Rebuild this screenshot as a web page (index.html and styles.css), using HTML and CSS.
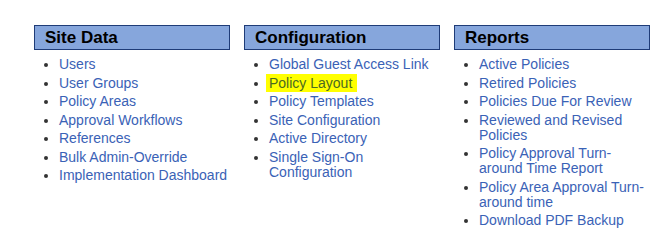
FILE: index.html
```html
<!DOCTYPE html>
<html lang="en">
  <head>
    <meta charset="utf-8" />
    <title>Administration</title>
    <link rel="stylesheet" href="styles.css">
  </head>
  <body>
    <div class="admin-menu">
      <div class="menu-column">
        <h2 class="menu-header">Site Data</h2>
        <ul class="menu-list">
          <li><a href="#">Users</a></li>
          <li><a href="#">User Groups</a></li>
          <li><a href="#">Policy Areas</a></li>
          <li><a href="#">Approval Workflows</a></li>
          <li><a href="#">References</a></li>
          <li><a href="#">Bulk Admin-Override</a></li>
          <li><a href="#">Implementation Dashboard</a></li>
        </ul>
      </div>

      <div class="menu-column">
        <h2 class="menu-header">Configuration</h2>
        <ul class="menu-list">
          <li><a href="#">Global Guest Access Link</a></li>
          <li><a href="#" class="current">Policy Layout</a></li>
          <li><a href="#">Policy Templates</a></li>
          <li><a href="#">Site Configuration</a></li>
          <li><a href="#">Active Directory</a></li>
          <li><a href="#">Single Sign-On Configuration</a></li>
        </ul>
      </div>

      <div class="menu-column">
        <h2 class="menu-header">Reports</h2>
        <ul class="menu-list">
          <li><a href="#">Active Policies</a></li>
          <li><a href="#">Retired Policies</a></li>
          <li><a href="#">Policies Due For Review</a></li>
          <li><a href="#">Reviewed and Revised Policies</a></li>
          <li><a href="#">Policy Approval Turn-around Time Report</a></li>
          <li><a href="#">Policy Area Approval Turn-around time</a></li>
          <li><a href="#">Download PDF Backup</a></li>
        </ul>
      </div>
    </div>
  </body>
</html>
```

FILE: styles.css
```css
* {
  margin: 0;
  padding: 0;
  box-sizing: border-box;
}

body {
  font-family: "Liberation Sans", Arial, sans-serif;
  background: #ffffff;
  color: #333;
}

.admin-menu {
  display: flex;
  gap: 14px;
  padding: 25px 0 0 34px;
}

.menu-column {
  width: 196px;
}

.menu-header {
  height: 25px;
  background: #86a6dc;
  border: 1px solid #1f3c78;
  padding-left: 10px;
  font-size: 17px;
  font-weight: bold;
  line-height: 23px;
  color: #000;
}

.menu-list {
  margin-top: 7px;
  padding-left: 25px;
  font-size: 14px;
  line-height: 15px;
}

.menu-list li {
  margin-bottom: 3.5px;
  color: #333;
}

.menu-list a {
  color: #3a62b6;
  text-decoration: none;
}

.menu-list a.current {
  background: #ffff00;
  color: #4a6a22;
  padding: 1px 5px 1px 3px;
  margin-left: -3px;
}
```
